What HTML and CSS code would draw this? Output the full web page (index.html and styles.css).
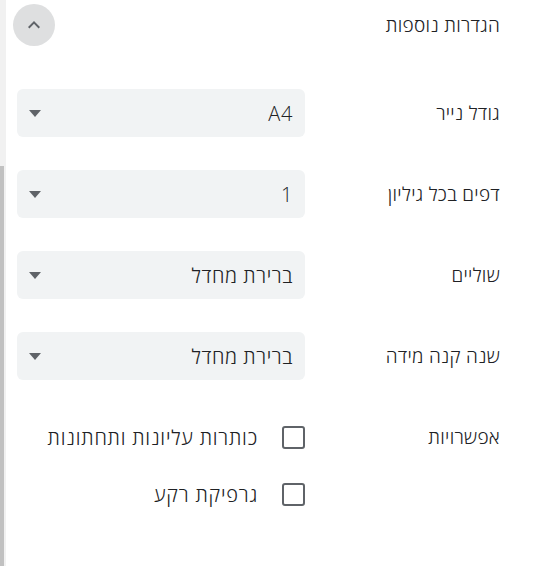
FILE: index.html
```html
<!DOCTYPE html>
<html lang="he">
<head>
<meta charset="utf-8">
<title>הגדרות נוספות</title>
<link rel="stylesheet" href="styles.css">
</head>
<body>
<div class="page">
  <div class="scrollbar"><div class="thumb"></div></div>
  <main class="panel" dir="rtl">
    <div class="header">
      <span class="title">הגדרות נוספות</span>
      <button class="collapse" type="button" aria-label="כווץ">
        <svg width="24" height="24" viewBox="0 0 24 24"><path d="M7.41 15.41L12 10.83l4.59 4.58L18 14l-6-6-6 6z"/></svg>
      </button>
    </div>
    <div class="settings">
      <div class="row">
        <div class="label">גודל נייר</div>
        <div class="select"><span class="value">A4</span><span class="arrow"></span></div>
      </div>
      <div class="row">
        <div class="label">דפים בכל גיליון</div>
        <div class="select"><span class="value">1</span><span class="arrow"></span></div>
      </div>
      <div class="row">
        <div class="label">שוליים</div>
        <div class="select"><span class="value">ברירת מחדל</span><span class="arrow"></span></div>
      </div>
      <div class="row">
        <div class="label">שנה קנה מידה</div>
        <div class="select"><span class="value">ברירת מחדל</span><span class="arrow"></span></div>
      </div>
      <div class="row options">
        <div class="label">אפשרויות</div>
        <div class="checks">
          <label class="check"><span class="box"></span><span class="check-text">כותרות עליונות ותחתונות</span></label>
          <label class="check"><span class="box"></span><span class="check-text">גרפיקת רקע</span></label>
        </div>
      </div>
    </div>
  </main>
</div>
</body>
</html>
```

FILE: styles.css
```css
html, body {
  margin: 0;
  padding: 0;
  background: #ffffff;
}

body {
  font-family: "Open Sans", "Liberation Sans", sans-serif;
  font-weight: 300;
  color: #202124;
  font-size: 19px;
  height: 566px;
  overflow: hidden;
}

.page {
  display: flex;
  height: 566px;
}

.scrollbar {
  width: 6px;
  flex: none;
  background: #f1f1f1;
  display: flex;
  flex-direction: column;
}

.thumb {
  margin-top: 166px;
  flex: 1;
  width: 4px;
  background: #c1c1c1;
}

.panel {
  flex: 1;
  padding: 0 44px 0 11px;
}

.header {
  height: 50px;
  display: flex;
  align-items: center;
  justify-content: space-between;
}

.title,
.label {
  letter-spacing: 0.3px;
}

.collapse {
  width: 42px;
  height: 42px;
  border: none;
  border-radius: 50%;
  background: #dedfe0;
  padding: 0;
  margin-inline-end: -4px;
  display: flex;
  align-items: center;
  justify-content: center;
}

.collapse svg {
  fill: #5f6368;
}

.settings {
  padding-top: 39px;
  display: flex;
  flex-direction: column;
  gap: 33px;
}

.row {
  display: grid;
  grid-template-columns: 1fr 288px;
  align-items: center;
}

.select {
  height: 48px;
  box-sizing: border-box;
  background: #f1f3f4;
  border-radius: 6px;
  display: flex;
  align-items: center;
  justify-content: space-between;
  padding: 0 12px 0 12px;
}

.value {
  font-size: 20px;
  letter-spacing: 0.6px;
}

.arrow {
  width: 0;
  height: 0;
  border-left: 6.5px solid transparent;
  border-right: 6.5px solid transparent;
  border-top: 7px solid #5f6368;
}

.options {
  align-items: start;
}

.options .label {
  line-height: 48px;
}

.checks {
  display: flex;
  flex-direction: column;
  gap: 9px;
}

.check {
  height: 48px;
  display: flex;
  align-items: center;
  gap: 24px;
}

.check-text {
  font-size: 20px;
  letter-spacing: 0.8px;
}

.box {
  width: 23px;
  height: 23px;
  box-sizing: border-box;
  border: 2.5px solid #5f6368;
  border-radius: 3px;
  flex: none;
}
```
